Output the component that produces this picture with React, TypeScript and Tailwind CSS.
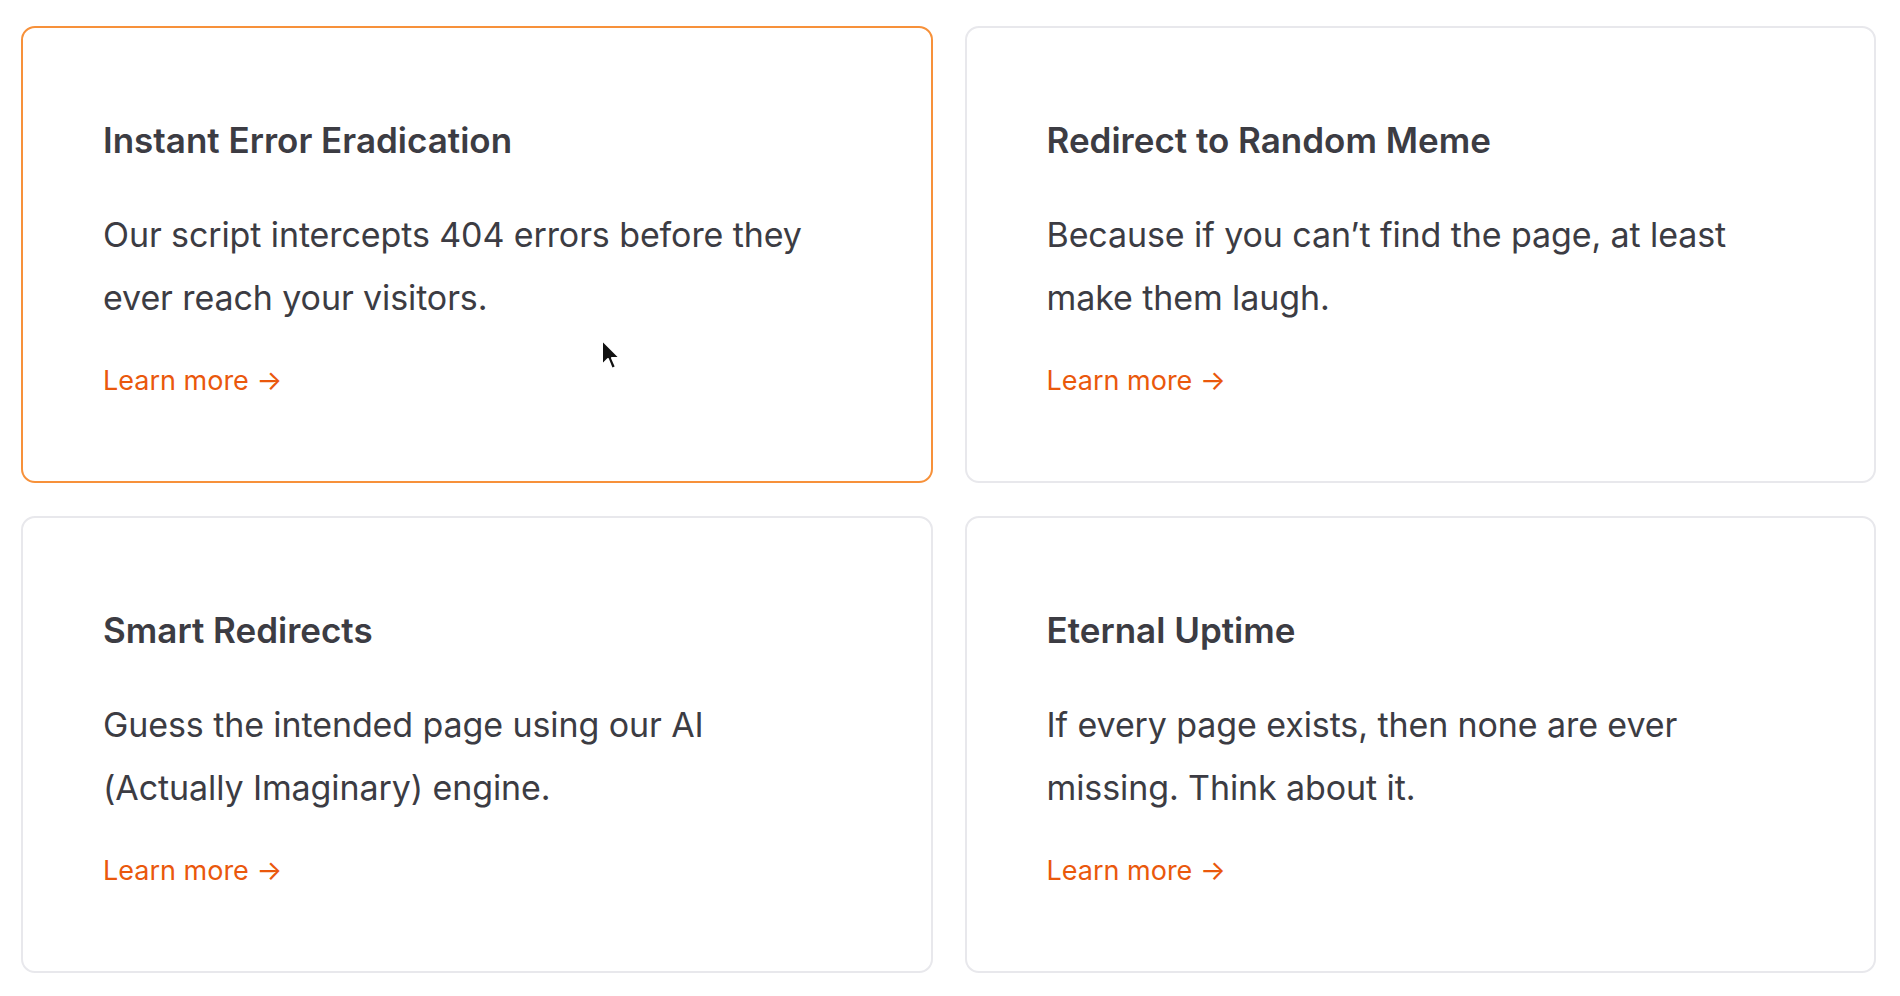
import React from "react";

const cards = [
  {
    title: "Instant Error Eradication",
    lines: ["Our script intercepts 404 errors before they", "ever reach your visitors."],
    active: true,
  },
  {
    title: "Redirect to Random Meme",
    lines: ["Because if you can\u2019t find the page, at least", "make them laugh."],
  },
  {
    title: "Smart Redirects",
    lines: ["Guess the intended page using our AI", "(Actually Imaginary) engine."],
  },
  {
    title: "Eternal Uptime",
    lines: ["If every page exists, then none are ever", "missing. Think about it."],
  },
];

function Card({ title, lines, active }: { title: string; lines: string[]; active?: boolean }) {
  return (
    <div
      className={
        "rounded-[14px] border-2 bg-white pl-[80px] pr-8 pt-[90px] pb-[84px] " +
        (active ? "border-[#f7913a]" : "border-[#e8e8ec]")
      }
    >
      <h3 className="text-[35px] leading-[44px] font-semibold text-[#3c3c43]">{title}</h3>
      <p className="mt-[41px] text-[34px] leading-[63px] text-[#3c3c43] tracking-[-0.1px]">
        {lines[0]}
        <br />
        {lines[1]}
      </p>
      <a className="mt-[36px] block text-[27px] leading-[32px] text-[#ea580c]" href="#">
        Learn more →
      </a>
    </div>
  );
}

export default function App() {
  return (
    <div
      className="relative min-h-[996px] w-[1900px] bg-white pl-[21px] pr-[24px] pt-[26px]"
      style={{ fontFamily: "Inter, 'Noto Sans', sans-serif" }}
    >
      <div className="grid grid-cols-2 gap-x-8 gap-y-[33px]">
        {cards.map((c) => (
          <Card key={c.title} {...c} />
        ))}
      </div>
      <svg
        className="absolute left-[600px] top-[338px]"
        width="22"
        height="34"
        viewBox="0 0 22 34"
      >
        <path
          d="M2 2 L2 27 L8 21 L12 31 L16 29 L12 20 L20 20 Z"
          fill="#111"
          stroke="#fff"
          strokeWidth="2"
          strokeLinejoin="round"
        />
      </svg>
    </div>
  );
}
